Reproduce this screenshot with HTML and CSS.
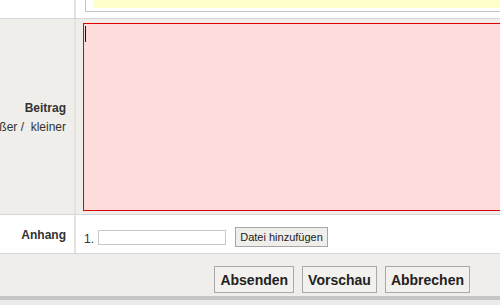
FILE: index.html
```html
<!DOCTYPE html>
<html lang="de">
<head>
    <meta charset="UTF-8">
    <meta name="viewport" content="width=device-width, initial-scale=1.0">
    <title>Beitrag schreiben</title>
    <link rel="stylesheet" href="styles.css">
</head>
<body>
    <div class="form">
        <div class="row row-top">
            <div class="label"></div>
            <div class="field">
                <div class="notice"><div class="notice-inner"></div></div>
            </div>
        </div>

        <div class="row row-post">
            <div class="label label-post">
                <span class="label-title">Beitrag</span>
                <span class="label-size">größer / &nbsp;kleiner</span>
            </div>
            <div class="field field-post">
                <div class="message"><span class="caret"></span></div>
            </div>
        </div>

        <div class="row row-attach">
            <div class="label">
                <span class="label-title">Anhang</span>
            </div>
            <div class="field field-attach">
                <span class="num">1.</span>
                <input type="text" class="file-name">
                <button type="button" class="small-btn">Datei hinzufügen</button>
            </div>
        </div>

        <div class="actions">
            <button type="button" class="btn">Absenden</button>
            <button type="button" class="btn">Vorschau</button>
            <button type="button" class="btn">Abbrechen</button>
        </div>
        <div class="bottom-bar"></div>
    </div>
</body>
</html>
```

FILE: styles.css
```css
body {
    margin: 0;
    font-family: 'Liberation Sans', Arial, sans-serif;
    color: #333;
    background-color: #ebebeb;
    overflow: hidden;
}
.form {
    width: 500px;
}
.row {
    display: flex;
    border-bottom: 1px solid #d6d6d6;
}
.label {
    flex-shrink: 0;
    border-right: 2px solid #e4e3df;
    box-sizing: border-box;
    width: 76px;
    padding-right: 8px;
    display: flex;
    flex-direction: column;
    justify-content: center;
    align-items: flex-end;
}
.field {
    flex: 1;
    min-width: 0;
}
.label-title {
    font-size: 12px;
    font-weight: bold;
    white-space: nowrap;
}
.label-size {
    font-size: 12px;
    white-space: nowrap;
    margin-top: 5px;
}

/* top row with notice box */
.row-top {
    height: 18px;
    background-color: #fff;
}
.notice {
    margin-left: 9px;
    border-left: 1px solid #c4c4c4;
    border-bottom: 1px solid #c4c4c4;
    padding: 0 0 3px 7px;
    width: 600px;
}
.notice-inner {
    height: 8px;
    background-color: #ffffcc;
}

/* message row */
.row-post {
    height: 195px;
    background-color: #efeeea;
}
.label-post {
    padding-top: 2px;
}
.field-post {
    padding: 4px 0 0 7px;
}
.message {
    width: 600px;
    height: 186px;
    border: 1px solid #e00000;
    background-color: #ffdcdc;
}
.caret {
    display: block;
    width: 1px;
    height: 16px;
    margin: 2px 0 0 1px;
    background-color: #111;
}

/* attachment row */
.row-attach {
    height: 38px;
    background-color: #fff;
}
.row-attach .label {
    padding-top: 2px;
}
.field-attach {
    display: flex;
    align-items: center;
    padding: 5px 0 0 8px;
}
.num {
    font-size: 12px;
    margin-right: 4px;
    padding-top: 4px;
}
.file-name {
    width: 128px;
    height: 15px;
    box-sizing: border-box;
    border: 1px solid #c8c8c8;
    padding: 0;
    margin: 1px 0 0 0;
}
.small-btn {
    margin-left: 9px;
    width: 93px;
    height: 20px;
    padding: 0;
    font-family: 'Liberation Sans', Arial, sans-serif;
    font-size: 11px;
    color: #222;
    background-color: #efeeea;
    border: 1px solid #a6a6a6;
}

/* footer buttons */
.actions {
    height: 42px;
    background-color: #efeeea;
    display: flex;
    justify-content: flex-end;
    align-items: flex-start;
    gap: 8px;
    padding-right: 30px;
    padding-top: 12px;
    box-sizing: border-box;
}
.btn {
    height: 27px;
    padding: 0 5px;
    font-family: 'Liberation Sans', Arial, sans-serif;
    font-size: 14px;
    font-weight: bold;
    color: #222;
    background-color: #f2f1ed;
    border: 1px solid #a8a8a8;
}
.bottom-bar {
    height: 4px;
    background-color: #c6c6c6;
}
```
